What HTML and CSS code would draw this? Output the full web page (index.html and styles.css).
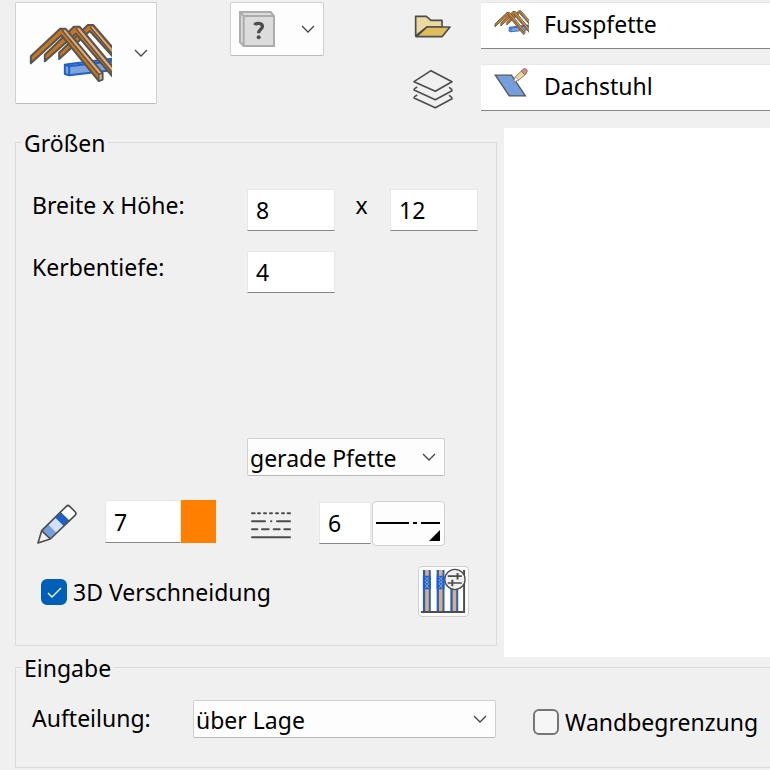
FILE: index.html
```html
<!DOCTYPE html>
<html lang="de">
<head>
<meta charset="utf-8">
<meta name="viewport" content="width=device-width, initial-scale=1">
<title>Fusspfette</title>
<link rel="stylesheet" href="styles.css">
</head>
<body>
<svg class="defs" aria-hidden="true">
  <symbol id="chevron" viewBox="0 0 14 8"><path d="M1 1l6 6 6-6" fill="none" stroke="#444" stroke-width="1.3"/></symbol>
  <symbol id="roof" viewBox="58 60 248 180">
    <g stroke="#555" stroke-width="6" stroke-linejoin="round">
      <path fill="#c8751c" d="M148 168v-19L234 66h16l90 104v26L240 84z"/>
      <path fill="none" stroke="#e0ad7c" stroke-width="5" d="M246 72l84 98"/>
      <path fill="none" stroke-width="4" d="M240 71l86 104"/>
      <path fill="#7fa3dc" stroke="#1f62c8" d="M165 185l14-2 140-17v34l-141 17-13-4z"/>
      <path fill="none" stroke="#1f62c8" d="M165 185l13 5v27M178 190l140-17"/>
      <path fill="#c8751c" d="M105 175v-20L192 71h17l120 144v30L198 92z"/>
      <path fill="none" stroke="#e0ad7c" stroke-width="6" d="M205 77l120 144"/>
      <path fill="none" stroke-width="4" d="M198 76l124 152"/>
      <path fill="#c8751c" d="M63 181v-21L151 77h16l111 133v20l-11 4L155 97z"/>
      <path fill="none" stroke="#e0ad7c" stroke-width="6" d="M163 82l109 129"/>
      <path fill="none" stroke-width="4" d="M156 81l111 134"/>
      <path fill="#e0ad7c" stroke-width="4" d="M267 215l11-5v19l-11 5z"/>
    </g>
  </symbol>
</svg>

<header class="toolbar">
  <button class="tool tool-main" type="button" aria-label="Bauteil">
    <svg class="roof-icon" aria-hidden="true"><use href="#roof"/></svg>
    <svg class="chevron" aria-hidden="true"><use href="#chevron"/></svg>
  </button>
  <button class="tool tool-help" type="button" aria-label="Hilfe">
    <svg class="help-icon" viewBox="0 0 108 108" aria-hidden="true">
      <path d="M3 3h92l10 12v90H14L3 93z" fill="#dcdcdc" stroke="#acacac" stroke-width="6"/>
      <path d="M3 3l11 12h91M14 15v90" fill="none" stroke="#acacac" stroke-width="6"/>
      <path d="M47 42c2-4 7-5 12-5 11 0 14 9 8 16-5 5-8 6-8 14" fill="none" stroke="#4d4d4d" stroke-width="10"/>
      <circle cx="59" cy="79" r="6" fill="#4d4d4d"/>
    </svg>
    <svg class="chevron" aria-hidden="true"><use href="#chevron"/></svg>
  </button>
  <div class="assign">
    <button class="plain" type="button" aria-label="Öffnen">
      <svg class="wide-icon" viewBox="0 0 120 78" aria-hidden="true">
        <g stroke="#4d4d4d" stroke-width="5" stroke-linejoin="round">
          <path fill="#ecd9a2" d="M8 66V7h32l14 12h33v20H42z"/>
          <path fill="#e0bd5c" d="M10 68l32-29h69L87 68z"/>
        </g>
      </svg>
    </button>
    <label class="field">
      <svg class="roof-small" aria-hidden="true"><use href="#roof"/></svg>
      <input type="text" value="Fusspfette" aria-label="Bauteilname">
    </label>
    <button class="plain" type="button" aria-label="Ebene">
      <svg class="layers-icon" viewBox="0 0 126 120" aria-hidden="true">
        <g fill="none" stroke="#4d4d4d" stroke-width="5" stroke-linejoin="round" stroke-linecap="round">
          <path d="M57 5l63 33-50 29L6 38z"/>
          <path d="M14 55c-8 4-8 6-8 8l64 29 50-27c0-3-1-6-7-9"/>
          <path d="M14 79c-8 4-8 6-8 8l64 29 50-27c0-3-1-6-7-9"/>
        </g>
      </svg>
    </button>
    <label class="field">
      <svg class="plane-icon" viewBox="0 0 108 96" aria-hidden="true">
        <path d="M4 24h50l43 64H47z" fill="#759fdc" stroke="#555" stroke-width="4"/>
        <path d="M61 45l5-17 22-20 12 11-23 20z" fill="#ecd596" stroke="#8c8467" stroke-width="3"/>
        <path d="M84 11l8-7c7-3 14 6 9 11l-7 7z" fill="#dd8583" stroke="#8c6d6b" stroke-width="3"/>
        <path d="M61 45l5-16 10 9z" fill="#fff" stroke="#777" stroke-width="2"/>
      </svg>
      <input type="text" value="Dachstuhl" aria-label="Ebenenname">
    </label>
  </div>
</header>

<main>
  <div class="work">
    <fieldset class="sizes">
      <legend>Größen</legend>
      <div class="dims">
        <label for="width">Breite x Höhe:</label>
        <input class="num" id="width" type="text" value="8">
        <label class="times" for="height">x</label>
        <input class="num" id="height" type="text" value="12">
        <label for="notch">Kerbentiefe:</label>
        <input class="num" id="notch" type="text" value="4">
      </div>
      <div class="combo combo-shape">
        <select aria-label="Pfettenform"><option>gerade Pfette</option></select>
        <svg class="chevron" aria-hidden="true"><use href="#chevron"/></svg>
      </div>
      <div class="pens">
        <svg class="pen-icon" viewBox="0 0 120 120" aria-hidden="true">
          <path d="M3 117l11-37 26 25z" fill="#f0f0f0"/>
          <path d="M14 80l20-19 25 25-19 19z" fill="#789fdc"/>
          <path d="M34 61l21-20 25 25-21 20z" fill="#d3e1f6"/>
          <path d="M55 41l17-17 25 25-17 17z" fill="#1f60c6"/>
          <path d="M72 24l16-16q5-5 10 0l17 17q4 5-1 10L97 49z" fill="#fff"/>
          <path d="M3 117l11-37L88 7q5-5 10 0l17 17q4 5-1 10l-74 71zM14 80l26 25" fill="none" stroke="#4d4d4d" stroke-width="5" stroke-linejoin="round"/>
        </svg>
        <input class="num pen-num" type="text" value="7" aria-label="Stiftnummer">
        <button class="swatch" type="button" aria-label="Farbe"></button>
        <svg class="lines-icon" viewBox="0 0 120 81" aria-hidden="true">
          <g stroke="#4d4d4d" stroke-width="6" stroke-linecap="round">
            <path d="M3 4h8M21 4h6M39 4h6M57 4h6M75 4h6M93 4h6M110 4h7"/>
            <path d="M3 28h39M60 28h1M78 28h39M3 52h16M33 52h20M68 52h18M100 52h17M3 76h114"/>
          </g>
        </svg>
        <input class="num line-num" type="text" value="6" aria-label="Linientyp">
        <button class="line-type" type="button" aria-label="Linientyp wählen">
          <svg viewBox="0 0 71 43" aria-hidden="true">
            <path d="M3 21h33M40 21h4M48 21h19" stroke="#000" stroke-width="2"/>
            <path d="M67 28v11H56z"/>
          </svg>
        </button>
      </div>
      <div class="options">
        <label class="check">
          <input type="checkbox" checked>
          <svg class="tick" viewBox="0 0 26 26" aria-hidden="true"><path d="M7 14l4 4 9-9" fill="none" stroke="#fff" stroke-width="1.400"/></svg>
          <span>3D Verschneidung</span>
        </label>
        <button class="settings" type="button" aria-label="Wandeinstellungen">
          <svg viewBox="0 0 150 150" aria-hidden="true">
            <path d="M12 9h24v126H12zM54 9h24v126H54zM96 60h24v75H96z" fill="#1f60c6"/>
            <path d="M19 9h11v126H19zM61 9h11v126H61zM103 60h11v75h-11z" fill="#dfad7c"/>
            <path d="M12 27h24v41H12zM54 27h24v41H54z" fill="#1f60c6"/>
            <path d="M19 30l11 11-11 10 11 14M30 30L19 41l11 10-11 14M61 30l11 11-11 10 11 14M72 30L61 41l11 10-11 14" fill="none" stroke="#86a9e5" stroke-width="3"/>
            <path d="M6 138h132V9" fill="none" stroke="#4d4d4d" stroke-width="6"/>
            <circle cx="110" cy="38" r="31" fill="#f0f0f0" stroke="#4d4d4d" stroke-width="4"/>
            <path d="M88 28h43M88 49h43" stroke="#4d4d4d" stroke-width="5"/>
            <path d="M118 18v20M102 39v20" stroke="#4d4d4d" stroke-width="6"/>
          </svg>
        </button>
      </div>
    </fieldset>
    <section class="preview" aria-label="Vorschau"></section>
  </div>

  <fieldset class="entry">
    <legend>Eingabe</legend>
    <div class="entry-row">
      <label class="entry-label" for="split">Aufteilung:</label>
      <div class="combo combo-split">
        <select id="split"><option>über Lage</option></select>
        <svg class="chevron" aria-hidden="true"><use href="#chevron"/></svg>
      </div>
      <label class="check">
        <input type="checkbox">
        <span>Wandbegrenzung</span>
      </label>
    </div>
  </fieldset>
</main>
</body>
</html>
```
FILE: styles.css
```css
* {
  box-sizing: border-box;
}

body {
  margin: 0;
  padding: 2px 0 2px 15px;
  overflow-x: hidden;
  background: #f0f0f0;
  color: #000;
  font: 23px/30px "Noto Sans", "Open Sans", sans-serif;
}

button,
input,
select {
  margin: 0;
  color: inherit;
  font: inherit;
}

svg {
  display: block;
  flex: none;
}

.defs {
  position: absolute;
  width: 0;
  height: 0;
}

.chevron {
  width: 14px;
  height: 8px;
}

/* Toolbar */

.toolbar {
  display: flex;
  align-items: flex-start;
  height: 125px;
}

.tool {
  display: flex;
  flex: none;
  align-items: center;
  justify-content: space-between;
  border: 1px solid #d0d0d0;
  border-bottom-color: #bababa;
  border-radius: 2px;
  background: #fdfdfd;
}

.tool-main {
  width: 142px;
  height: 102px;
  padding: 0 8px 0 13px;
}

.tool-help {
  width: 94px;
  height: 54px;
  margin-left: 73px;
  padding: 0 8px;
}

.roof-icon {
  width: 83px;
  height: 60px;
}

.help-icon {
  width: 36px;
  height: 36px;
}

.assign {
  display: grid;
  flex: 1;
  grid-template-columns: 44px 1fr;
  gap: 15px 26px;
  margin-left: 87px;
}

.plain {
  display: grid;
  place-items: center;
  height: 47px;
  padding: 2px 0 0;
  border: 0;
  background: none;
}

.wide-icon {
  width: 40px;
  height: 26px;
}

.layers-icon {
  width: 42px;
  height: 40px;
}

.field {
  display: flex;
  align-items: center;
  min-width: 0;
  height: 47px;
  padding: 0 0 4px 13px;
  border-top: 1px solid #e8e8e8;
  border-bottom: 1px solid #868686;
  background: #fff;
}

.field input {
  flex: 1;
  min-width: 0;
  padding: 0;
  border: 0;
  background: none;
}

.field svg {
  align-self: flex-start;
  width: 35px;
  margin-right: 15px;
}

.roof-small {
  height: 25px;
  margin-top: 7px;
}

.plane-icon {
  height: 32px;
  margin-top: 2px;
}

/* Groups */

fieldset {
  min-width: 0;
  margin: 0;
  padding: 0 16px;
  border: 1px solid #dcdcdc;
}

legend {
  height: 30px;
  margin-left: -10px;
  padding: 0 3px 0 2px;
  line-height: 32px;
}

.work {
  display: flex;
  gap: 7px;
}

.sizes {
  flex: none;
  width: 482px;
  margin-bottom: 11px;
  padding-bottom: 28px;
}

.preview {
  flex: 1;
  margin-top: 1px;
  background: #fff;
}

.dims {
  display: grid;
  grid-template-columns: 215px 88px 55px 88px;
  gap: 20px 0;
  padding-top: 32px;
}

.dims label {
  line-height: 32px;
}

.times {
  padding-right: 2px;
  text-align: center;
}

.num {
  width: 88px;
  height: 42px;
  padding: 0 0 0 8px;
  border: 1px solid #e8e8e8;
  border-bottom-color: #868686;
  border-radius: 0;
  background: #fff;
}

.combo {
  position: relative;
  height: 38px;
}

.combo select {
  width: 100%;
  height: 100%;
  padding: 2px 24px 0 2px;
  border: 1px solid #d0d0d0;
  border-bottom-color: #bababa;
  border-radius: 2px;
  background: #fdfdfd;
  appearance: none;
}

.combo .chevron {
  position: absolute;
  top: 15px;
  right: 9px;
  pointer-events: none;
}

.combo-shape {
  width: 198px;
  margin: 145px 0 0 215px;
}

.pens {
  display: flex;
  align-items: flex-end;
  height: 46px;
  margin-top: 24px;
}

.pen-icon {
  width: 40px;
  height: 40px;
  margin: 0 0 2px 5px;
}

.pen-num {
  align-self: flex-start;
  width: 76px;
  height: 43px;
  margin-left: 28px;
}

.swatch {
  align-self: flex-start;
  width: 35px;
  height: 43px;
  padding: 0;
  border: 0;
  background: #ff8000;
}

.lines-icon {
  width: 40px;
  height: 27px;
  margin: 0 0 7px 35px;
}

.line-num {
  width: 52px;
  margin: 0 0 2px 28px;
}

.line-type {
  width: 73px;
  height: 45px;
  margin-left: 1px;
  padding: 0;
  border: 1px solid #d0d0d0;
  border-radius: 4px;
  background: #fdfdfd;
}

.options {
  display: flex;
  align-items: center;
  justify-content: space-between;
  margin-top: 20px;
  padding: 0 11px 0 9px;
}

.check {
  position: relative;
  display: flex;
  flex: none;
  align-items: center;
  gap: 6px;
}

.check input {
  width: 26px;
  height: 26px;
  border: 2px solid #767676;
  border-radius: 6px;
  background: #f6f6f6;
  appearance: none;
}

.check input:checked {
  border-color: #005fb8;
  background: #005fb8;
}

.tick {
  position: absolute;
  left: 0;
  width: 26px;
  height: 26px;
  pointer-events: none;
}

.settings {
  width: 51px;
  height: 51px;
  padding: 0;
  border: 1px solid #d0d0d0;
  border-radius: 4px;
  background: #fdfdfd;
}

.settings svg {
  width: 49px;
  height: 49px;
}

/* Input group */

.entry {
  margin: -5px -2px 0 0;
  padding-bottom: 29px;
}

.entry-row {
  display: flex;
  padding-top: 18px;
}

.entry-label {
  flex: none;
  width: 161px;
  line-height: 36px;
}

.combo-split {
  flex: none;
  width: 303px;
  margin-right: 37px;
}

.entry .check {
  padding-top: 6px;
}
```
